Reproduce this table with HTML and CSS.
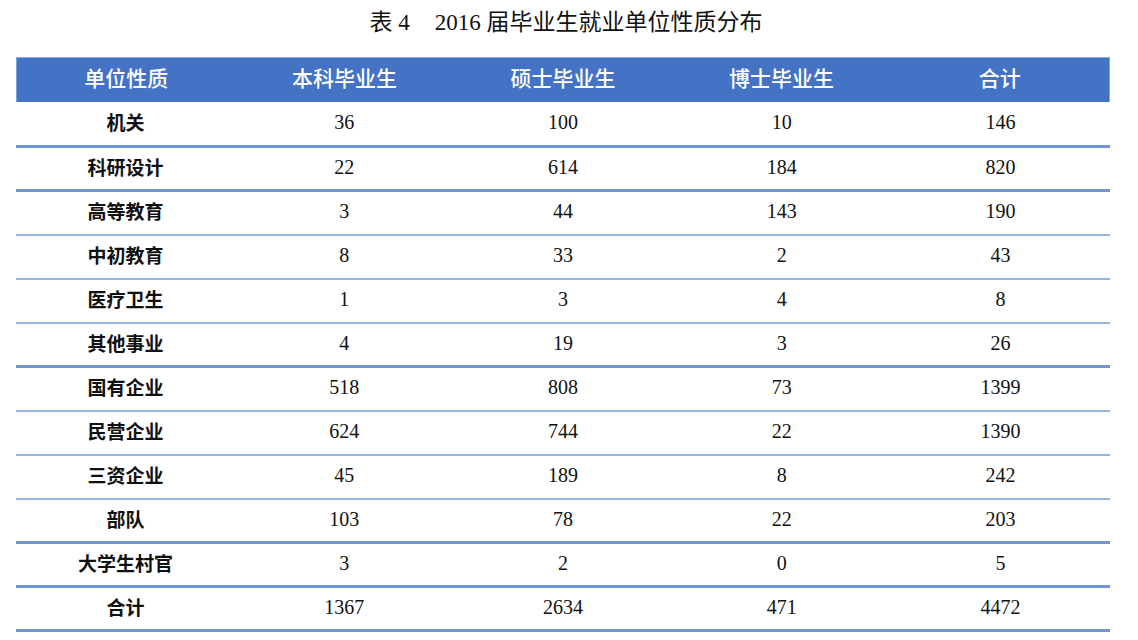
FILE: index.html
```html
<!DOCTYPE html>
<html lang="zh">
<head>
<meta charset="utf-8">
<title>表4 2016届毕业生就业单位性质分布</title>
<link rel="stylesheet" href="styles.css">
</head>
<body>
<div class="page">
  <h1 class="title">表 4<span class="gap"></span>2016 届毕业生就业单位性质分布</h1>
  <div class="table">
    <div class="row head">
      <div class="cell">单位性质</div><div class="cell">本科毕业生</div><div class="cell">硕士毕业生</div><div class="cell">博士毕业生</div><div class="cell">合计</div>
    </div>
    <div class="row first thick"><div class="cell label">机关</div><div class="cell">36</div><div class="cell">100</div><div class="cell">10</div><div class="cell">146</div></div>
    <div class="row thick"><div class="cell label">科研设计</div><div class="cell">22</div><div class="cell">614</div><div class="cell">184</div><div class="cell">820</div></div>
    <div class="row thin"><div class="cell label">高等教育</div><div class="cell">3</div><div class="cell">44</div><div class="cell">143</div><div class="cell">190</div></div>
    <div class="row thin"><div class="cell label">中初教育</div><div class="cell">8</div><div class="cell">33</div><div class="cell">2</div><div class="cell">43</div></div>
    <div class="row thin"><div class="cell label">医疗卫生</div><div class="cell">1</div><div class="cell">3</div><div class="cell">4</div><div class="cell">8</div></div>
    <div class="row thick"><div class="cell label">其他事业</div><div class="cell">4</div><div class="cell">19</div><div class="cell">3</div><div class="cell">26</div></div>
    <div class="row thin"><div class="cell label">国有企业</div><div class="cell">518</div><div class="cell">808</div><div class="cell">73</div><div class="cell">1399</div></div>
    <div class="row thin"><div class="cell label">民营企业</div><div class="cell">624</div><div class="cell">744</div><div class="cell">22</div><div class="cell">1390</div></div>
    <div class="row thin"><div class="cell label">三资企业</div><div class="cell">45</div><div class="cell">189</div><div class="cell">8</div><div class="cell">242</div></div>
    <div class="row thick"><div class="cell label">部队</div><div class="cell">103</div><div class="cell">78</div><div class="cell">22</div><div class="cell">203</div></div>
    <div class="row thick"><div class="cell label">大学生村官</div><div class="cell">3</div><div class="cell">2</div><div class="cell">0</div><div class="cell">5</div></div>
    <div class="row thick"><div class="cell label">合计</div><div class="cell">1367</div><div class="cell">2634</div><div class="cell">471</div><div class="cell">4472</div></div>
  </div>
</div>
</body>
</html>
```

FILE: styles.css
```css
html, body {
  margin: 0;
  padding: 0;
  background: #ffffff;
}

.page {
  width: 1138px;
  padding: 0 16px;
  box-sizing: border-box;
}

.title {
  margin: 0 0 12px 0;
  height: 45px;
  line-height: 45px;
  text-align: center;
  font-family: "Liberation Serif", "Noto Sans CJK SC", sans-serif;
  font-weight: normal;
  font-size: 23px;
  color: #111111;
  padding-right: 6px;
}

.gap {
  display: inline-block;
  width: 25px;
}

.table {
  width: 1094px;
}

.row {
  display: grid;
  grid-template-columns: repeat(5, 1fr);
  height: 44px;
  box-sizing: border-box;
  align-items: center;
}

.row.head {
  height: 45px;
  background: #4472c4;
  border-top: 1px solid #8eaadb;
  border-right: 1px solid #8eaadb;
  border-left: 1px solid #7f9fd8;
  color: #ffffff;
}

.row.first {
  height: 46px;
}

.row.thick {
  border-bottom: 3px solid #7096d2;
}

.row.thin {
  border-bottom: 2px solid #9cb4e0;
}

.cell {
  text-align: center;
  font-family: "Liberation Serif", "Noto Sans CJK SC", serif;
  font-size: 20px;
  color: #111111;
  padding-bottom: 3px;
}

.row.head .cell {
  font-family: "Noto Sans CJK SC", sans-serif;
  font-weight: 500;
  color: #ffffff;
  font-size: 21px;
  padding-bottom: 6px;
}

.cell.label {
  font-family: "Noto Sans CJK SC", sans-serif;
  font-weight: bold;
  font-size: 19px;
  padding-bottom: 5px;
}
```
